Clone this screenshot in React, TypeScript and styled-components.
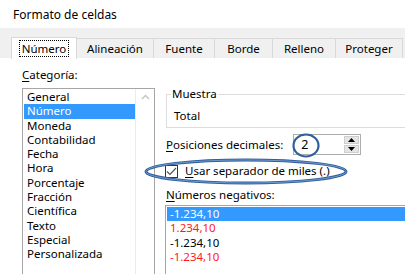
import React from "react";
import styled, { createGlobalStyle } from "styled-components";

const Global = createGlobalStyle`
  html, body { margin: 0; padding: 0; background: #ffffff; }
  body { font-family: "Noto Sans", "Open Sans", sans-serif; font-size: 11.5px; color: #000; }
`;

const Window = styled.div`
  position: relative;
  width: 405px;
  height: 274px;
  overflow: hidden;
  background: #ffffff;
`;

const TitleBar = styled.div`
  height: 28px;
  display: flex;
  align-items: center;
  padding-left: 13px;
  font-size: 12px;
  color: #000;
  background: #ffffff;
`;

const TabStrip = styled.div`
  height: 30px;
  background: #f0f0f0;
  display: flex;
  align-items: flex-end;
  padding-left: 11px;
  box-sizing: border-box;
`;

const Tab = styled.div<{ $active?: boolean; $w: number }>`
  box-sizing: border-box;
  height: ${(p) => (p.$active ? 22 : 20)}px;
  width: ${(p) => p.$w}px;
  flex-shrink: 0;
  display: flex;
  align-items: center;
  justify-content: center;
  border: 1px solid #d9d9d9;
  border-bottom: none;
  margin-left: ${(p) => (p.$active ? 0 : -1)}px;
  background: ${(p) => (p.$active ? "#ffffff" : "#f0f0f0")};
  position: relative;
  z-index: ${(p) => (p.$active ? 1 : 0)};
  margin-bottom: ${(p) => (p.$active ? -1 : 0)}px;
  white-space: nowrap;
`;

const Focus = styled.span`
  outline: 1px dotted #000;
  outline-offset: 0px;
  padding: 0 2px;
  line-height: 15px;
`;

const Panel = styled.div`
  display: flex;
  padding: 9px 0 0 22px;
  gap: 11px;
  background: #ffffff;
`;

const LeftCol = styled.div`
  display: flex;
  flex-direction: column;
  width: 133px;
  flex-shrink: 0;
`;

const Label = styled.div`
  height: 16px;
  line-height: 16px;
  white-space: nowrap;
`;

const U = styled.span`
  text-decoration: underline;
  text-underline-offset: 2px;
`;

const CatList = styled.div`
  margin-top: 5px;
  height: 220px;
  border: 1px solid #a6a6a6;
  display: flex;
  box-sizing: border-box;
`;

const Items = styled.div`
  flex: 1;
  padding-top: 1px;
`;

const Item = styled.div<{ $sel?: boolean; $color?: string }>`
  height: 14.3px;
  line-height: 14.3px;
  padding-left: 3px;
  margin-left: 1px;
  white-space: nowrap;
  background: ${(p) => (p.$sel ? "#3399ff" : "transparent")};
  color: ${(p) => (p.$sel ? "#ffffff" : p.$color || "#000")};
`;

const ScrollBar = styled.div`
  width: 19px;
  background: #ffffff;
  border-left: 1px solid #ececec;
  display: flex;
  justify-content: center;
  padding-top: 5px;
  box-sizing: border-box;
`;

const RightCol = styled.div`
  display: flex;
  flex-direction: column;
  width: 260px;
  flex-shrink: 0;
  padding-top: 21px;
`;

const Group = styled.fieldset`
  margin: 0;
  padding: 0 0 0 7px;
  border: 1px solid #dcdcdc;
  height: 40px;
  box-sizing: border-box;
`;

const Legend = styled.legend`
  padding: 0 1px;
  margin-left: -3px;
  line-height: 12px;
`;

const Sample = styled.div`
  line-height: 16px;
  margin-top: 8px;
`;

const Row = styled.div`
  display: flex;
  align-items: center;
  margin-top: 6px;
`;

const SpinBox = styled.div`
  margin-left: 10px;
  width: 68px;
  height: 21px;
  box-sizing: border-box;
  border: 1px solid #adadad;
  display: flex;
  background: #fff;
`;

const SpinValue = styled.div`
  flex: 1;
  padding-left: 7px;
  line-height: 19px;
  font-size: 12.5px;
`;

const SpinButtons = styled.div`
  width: 17px;
  display: flex;
  flex-direction: column;
  gap: 1px;
  padding: 1px;
  box-sizing: border-box;
`;

const SpinBtn = styled.div`
  flex: 1;
  background: #e5e5e5;
  border: 1px solid #cfcfcf;
  display: flex;
  align-items: center;
  justify-content: center;
`;

const CheckRow = styled.div`
  display: flex;
  align-items: center;
  margin-top: 8px;
  height: 16px;
`;

const Box = styled.div`
  width: 13px;
  height: 13px;
  box-sizing: border-box;
  border: 1px solid #333;
  margin-left: -1px;
  margin-right: 7px;
  display: flex;
  align-items: center;
  justify-content: center;
  background: #fff;
`;

const NegLabel = styled(Label)`
  margin-top: 8px;
`;

const NegList = styled.div`
  margin-top: 2px;
  border: 1px solid #a6a6a6;
  height: 80px;
  box-sizing: border-box;
  padding-top: 1px;
  margin-left: -1px;
`;

const Overlay = styled.svg`
  position: absolute;
  left: 0;
  top: 0;
  pointer-events: none;
`;

const tabs = [
  { t: "Número", w: 66 },
  { t: "Alineación", w: 78 },
  { t: "Fuente", w: 62 },
  { t: "Borde", w: 59 },
  { t: "Relleno", w: 64 },
  { t: "Proteger", w: 68 },
];

const cats = [
  "General",
  "Número",
  "Moneda",
  "Contabilidad",
  "Fecha",
  "Hora",
  "Porcentaje",
  "Fracción",
  "Científica",
  "Texto",
  "Especial",
  "Personalizada",
];

const negs = [
  { t: "-1.234,10", c: "#000", sel: true },
  { t: "1.234,10", c: "#ff1a1a" },
  { t: "-1.234,10", c: "#000" },
  { t: "-1.234,10", c: "#ff1a1a" },
];

export default function App() {
  return (
    <Window>
      <Global />
      <TitleBar>Formato de celdas</TitleBar>
      <TabStrip>
        {tabs.map((tb, i) => (
          <Tab key={tb.t} $active={i === 0} $w={tb.w}>
            {i === 0 ? <Focus>{tb.t}</Focus> : tb.t}
          </Tab>
        ))}
      </TabStrip>
      <Panel>
        <LeftCol>
          <Label>
            <U>C</U>ategoría:
          </Label>
          <CatList>
            <Items>
              {cats.map((c, i) => (
                <Item key={c} $sel={i === 1}>
                  {c}
                </Item>
              ))}
            </Items>
            <ScrollBar>
              <svg width="9" height="6" viewBox="0 0 9 6">
                <path d="M1 5 L4.5 1.5 L8 5" fill="none" stroke="#c2c2c2" strokeWidth="1.3" />
              </svg>
            </ScrollBar>
          </CatList>
        </LeftCol>
        <RightCol>
          <Group>
            <Legend>Muestra</Legend>
            <Sample>Total</Sample>
          </Group>
          <Row>
            <Label>
              <U>P</U>osiciones decimales:
            </Label>
            <SpinBox>
              <SpinValue>2</SpinValue>
              <SpinButtons>
                <SpinBtn>
                  <svg width="7" height="4" viewBox="0 0 7 4">
                    <path d="M0 4 L3.5 0 L7 4 Z" fill="#000" />
                  </svg>
                </SpinBtn>
                <SpinBtn>
                  <svg width="7" height="4" viewBox="0 0 7 4">
                    <path d="M0 0 L3.5 4 L7 0 Z" fill="#000" />
                  </svg>
                </SpinBtn>
              </SpinButtons>
            </SpinBox>
          </Row>
          <CheckRow>
            <Box>
              <svg width="11" height="9" viewBox="0 0 11 9">
                <path d="M1 4.5 L4 7.5 L10 1" fill="none" stroke="#555" strokeWidth="1.2" />
              </svg>
            </Box>
            <Label>
              <U>U</U>sar separador de miles (.)
            </Label>
          </CheckRow>
          <NegLabel>
            <U>N</U>úmeros negativos:
          </NegLabel>
          <NegList>
            {negs.map((n, i) => (
              <Item key={i} $sel={n.sel} $color={n.c}>
                {n.t}
              </Item>
            ))}
          </NegList>
        </RightCol>
      </Panel>
      <Overlay width="405" height="274" viewBox="0 0 405 274">
        <ellipse cx="306" cy="145.5" rx="12.5" ry="11" fill="none" stroke="#2f5f9c" strokeWidth="2.2" />
        <ellipse cx="246" cy="171.5" rx="100" ry="11.5" fill="none" stroke="#2f5f9c" strokeWidth="3" />
        <ellipse cx="246" cy="171.5" rx="100" ry="11.5" fill="none" stroke="#6f98cc" strokeWidth="1" />
      </Overlay>
    </Window>
  );
}
